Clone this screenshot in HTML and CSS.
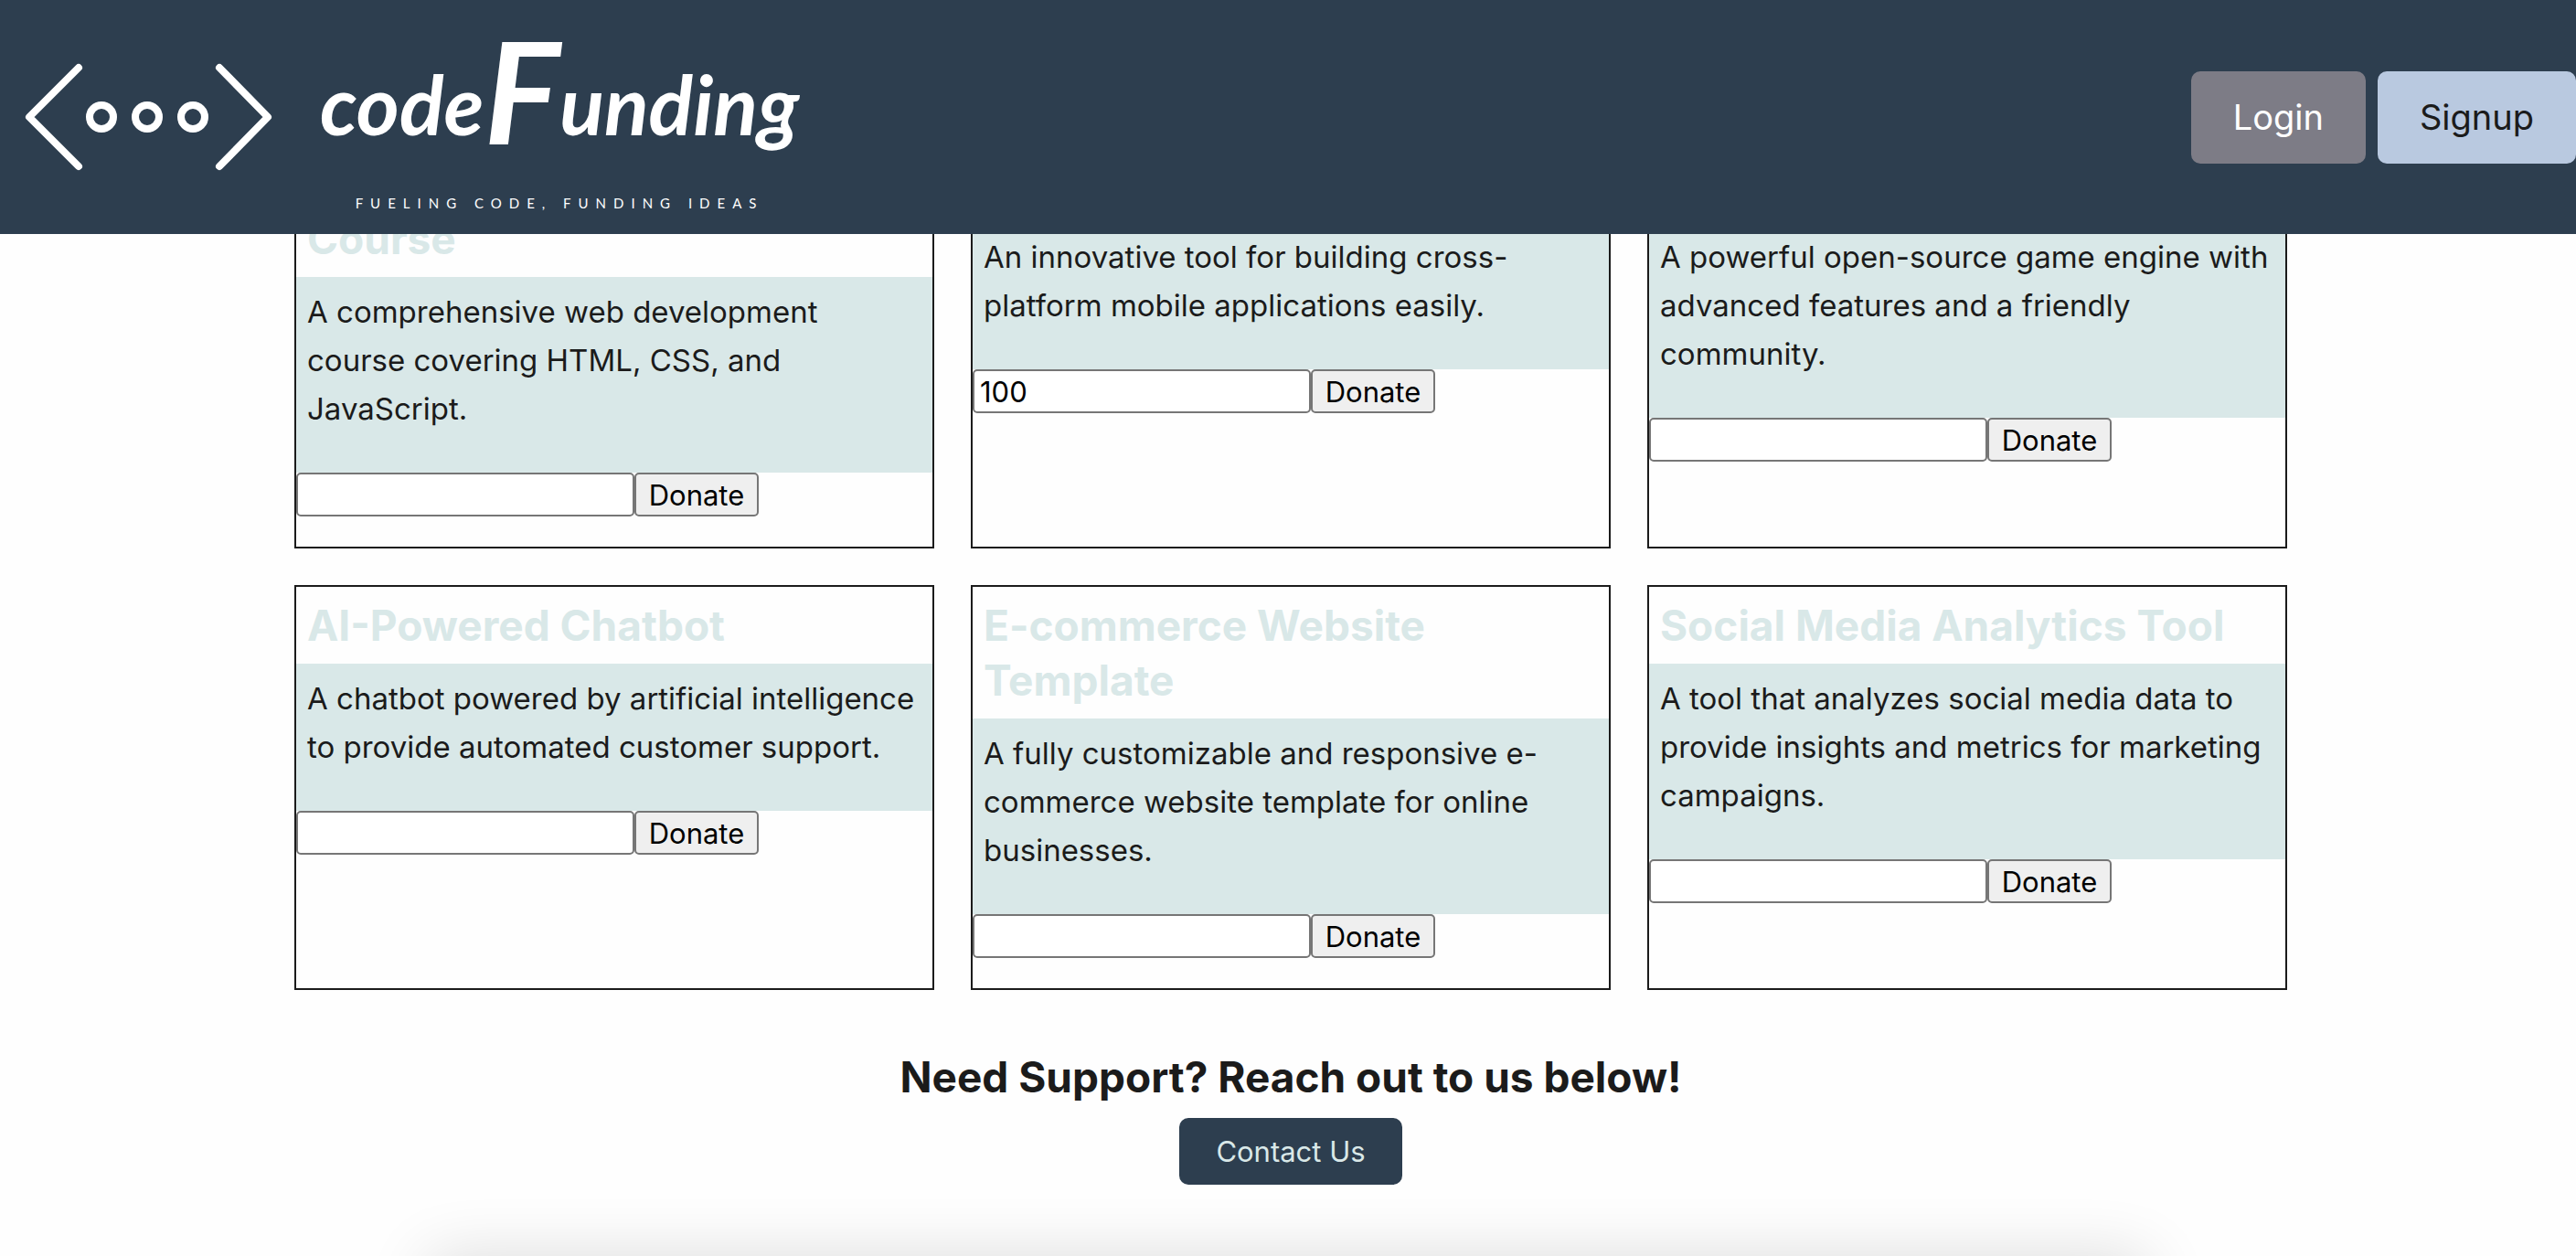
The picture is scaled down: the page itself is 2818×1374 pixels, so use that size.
FILE: index.html
```html
<!DOCTYPE html>
<html lang="en">
<head>
<meta charset="utf-8">
<meta name="viewport" content="width=device-width, initial-scale=1">
<title>codeFunding</title>
<link rel="stylesheet" href="styles.css">
</head>
<body>
<header class="site-header">
  <a class="brand" href="#">
    <svg class="brand-mark" viewBox="0 0 272 120" aria-hidden="true">
      <g fill="none" stroke="#fff" stroke-width="8" stroke-linecap="round" stroke-linejoin="round">
        <path d="M60 6 6 60l54 54M214 6l53 54-53 54"/>
        <circle cx="85" cy="60" r="13"/><circle cx="135" cy="60" r="13"/><circle cx="185" cy="60" r="13"/>
      </g>
    </svg>
    <span class="brand-text">
      <span class="brand-name">code<span class="brand-initial">F</span>unding</span>
      <span class="brand-tagline">FUELING CODE, FUNDING IDEAS</span>
    </span>
  </a>
  <nav class="account">
    <button class="account-button login" type="button">Login</button>
    <button class="account-button signup" type="button">Signup</button>
  </nav>
</header>
<main class="content">
  <section class="projects">
    <article class="card">
      <h3 class="card-title">Complete Web Development Course</h3>
      <p class="card-text">A comprehensive web development course covering HTML, CSS, and JavaScript.</p>
      <form class="donate"><input class="amount" type="text" aria-label="Donation amount"><button class="donate-button" type="button">Donate</button></form>
    </article>
    <article class="card">
      <h3 class="card-title">Mobile App Framework</h3>
      <p class="card-text">An innovative tool for building cross-platform mobile applications easily.</p>
      <form class="donate"><input class="amount" type="text" value="100" aria-label="Donation amount"><button class="donate-button" type="button">Donate</button></form>
    </article>
    <article class="card">
      <h3 class="card-title">Game Engine</h3>
      <p class="card-text">A powerful open-source game engine with advanced features and a friendly community.</p>
      <form class="donate"><input class="amount" type="text" aria-label="Donation amount"><button class="donate-button" type="button">Donate</button></form>
    </article>
    <article class="card">
      <h3 class="card-title">AI-Powered Chatbot</h3>
      <p class="card-text">A chatbot powered by artificial intelligence to provide automated customer support.</p>
      <form class="donate"><input class="amount" type="text" aria-label="Donation amount"><button class="donate-button" type="button">Donate</button></form>
    </article>
    <article class="card">
      <h3 class="card-title">E-commerce Website Template</h3>
      <p class="card-text">A fully customizable and responsive e-commerce website template for online businesses.</p>
      <form class="donate"><input class="amount" type="text" aria-label="Donation amount"><button class="donate-button" type="button">Donate</button></form>
    </article>
    <article class="card">
      <h3 class="card-title">Social Media Analytics Tool</h3>
      <p class="card-text">A tool that analyzes social media data to provide insights and metrics for marketing campaigns.</p>
      <form class="donate"><input class="amount" type="text" aria-label="Donation amount"><button class="donate-button" type="button">Donate</button></form>
    </article>
  </section>
  <section class="support">
    <h2 class="support-title">Need Support? Reach out to us below!</h2>
    <button class="contact" type="button">Contact Us</button>
  </section>
</main>
<div class="page-end"></div>
</body>
</html>
```
FILE: styles.css
```css
* { box-sizing: border-box; }
body {
  margin: 0;
  min-height: 100vh;
  display: flex;
  flex-direction: column;
  overflow-x: hidden;
  background: #fefefe;
  color: #1b1b1b;
  font-family: Inter, "Liberation Sans", sans-serif;
  font-size: 33px;
}
button, input { font-family: inherit; }
h2, h3, p { margin: 0; }

.site-header {
  position: sticky;
  top: 0;
  z-index: 1;
  display: flex;
  justify-content: space-between;
  align-items: center;
  height: 256px;
  background: #2d3e4f;
}
.brand {
  display: flex;
  align-items: center;
  gap: 52px;
  padding-left: 26px;
  color: #fff;
  text-decoration: none;
}
.brand-mark { width: 272px; height: 120px; }
.brand-text {
  display: flex;
  flex-direction: column;
  align-items: center;
  gap: 10px;
}
.brand-name {
  font-family: Lato, "Liberation Sans", sans-serif;
  font-style: italic;
  font-weight: 700;
  font-size: 90px;
  line-height: 178px;
}
.brand-initial { font-size: 156px; line-height: 0; vertical-align: -10px; }
.brand-tagline {
  font-family: Lato, "Liberation Sans", sans-serif;
  font-size: 15px;
  line-height: 20px;
  letter-spacing: 8px;
}
.account { display: flex; gap: 13px; }
.account-button {
  height: 101px;
  padding: 0 46px;
  border: 0;
  border-radius: 10px;
  font-size: 38px;
}
.login { background: #7d7c86; color: #fff; }
.signup { background: #b9c9e0; color: #1b1b1b; }

.content {
  margin-top: -99px;
  padding: 0 316px 0 322px;
}
.projects {
  display: grid;
  grid-template-columns: repeat(3, 1fr);
  gap: 40px;
}
.card { border: 2px solid #1b1b1b; padding-bottom: 33px; }
.card-title {
  padding: 12px;
  color: #d9e8e8;
  font-size: 46px;
  font-weight: 700;
  line-height: 60px;
}
.card-text {
  padding: 12px 12px 43px;
  background: #d9e8e8;
  line-height: 53px;
}
.donate { display: flex; }
.amount {
  width: 370px;
  height: 48px;
  padding: 0 6px;
  border: 2px solid #767676;
  border-radius: 5px;
  background: #fff;
  color: #000;
  font-size: 31px;
}
.donate-button {
  width: 136px;
  height: 48px;
  padding: 0;
  border: 2px solid #767676;
  border-radius: 5px;
  background: #efefef;
  color: #000;
  font-size: 31px;
}
.support {
  display: flex;
  flex-direction: column;
  align-items: center;
  gap: 15px;
  padding: 65px 0 78px;
}
.support-title { font-size: 46px; font-weight: 700; line-height: 60px; }
.contact {
  height: 73px;
  padding: 0 40px;
  border: 0;
  border-radius: 10px;
  background: #2d3e4f;
  color: #d9e8e8;
  font-size: 31px;
}
.page-end {
  height: 0;
  margin: auto 500px 0;
  box-shadow: 0 34px 70px 30px rgba(0, 0, 0, 0.16);
}
```
